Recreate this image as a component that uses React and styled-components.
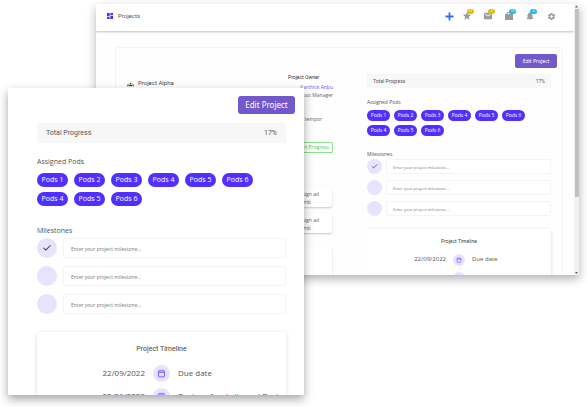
import React from "react";
import styled, { createGlobalStyle, ThemeProvider } from "styled-components";
import { Check } from "lucide-react";
import { MdDashboard, MdStar, MdEmail, MdNotifications, MdSettings, MdGroups } from "react-icons/md";

const Global = createGlobalStyle`
  *, *::before, *::after { box-sizing: border-box; }
  body {
    margin: 0;
    background: #fff;
    color: #555;
    font-family: "Open Sans", "Noto Sans", sans-serif;
    overflow: hidden;
  }
  button, input { font-family: inherit; }
  h1, h2, h3, p, ul, ol { margin: 0; padding: 0; font-weight: 400; list-style: none; }
`;

const large = {
  text: 7, date: 8, hint: 5,
  buttonText: 8, buttonW: 57, buttonH: 18, top: 8, right: 9, radius: 3,
  side: 29, endSide: 18, barTop: 9, barH: 20, barPad: 9,
  headTop: 14, headH: 10, podsTop: 6, podsEnd: 20, podW: 31, podH: 14, podGapX: 6, podGapY: 5,
  milesTop: 20, milesGap: 2, dot: 20, fieldH: 20, fieldGap: 6, rowGap: 8, inputPad: 7,
  cardTop: 18, cardPad: 11, titleH: 12, rowsTop: 10, node: 17, nodeGap: 8, icon: 9,
};

const small = {
  text: 5, date: 6, hint: 4,
  buttonText: 5, buttonW: 42, buttonH: 14, top: 6, right: 5, radius: 2,
  side: 0, endSide: 11, barTop: 6, barH: 14, barPad: 6,
  headTop: 11, headH: 6, podsTop: 5, podsEnd: 20, podW: 23, podH: 11, podGapX: 4, podGapY: 4,
  milesTop: 15, milesGap: 2, dot: 15, fieldH: 15, fieldGap: 4, rowGap: 6, inputPad: 6,
  cardTop: 13, cardPad: 8, titleH: 9, rowsTop: 8, node: 12, nodeGap: 7, icon: 6,
};

const Stage = styled.main`
  display: grid;
  grid-template-columns: 88fr 208fr 275fr;
  grid-template-rows: 84px 187px 120px;
  padding: 4px 8px 12px;
`;

const BackWindow = styled.section`
  grid-area: 1 / 2 / 3 / 4;
  display: flex;
  min-width: 0;
  min-height: 0;
  overflow: hidden;
  background: #fefefe;
  box-shadow: 0 4px 9px rgba(0, 0, 0, 0.3);
`;

const FrontWindow = styled.section`
  grid-area: 2 / 1 / 4 / 3;
  z-index: 1;
  min-width: 0;
  min-height: 0;
  overflow: hidden;
  background: #fff;
  box-shadow: 0 4px 9px rgba(0, 0, 0, 0.36);
`;

const Page = styled.div`
  flex: 1;
  min-width: 0;
  display: flex;
  flex-direction: column;
`;

const TopBar = styled.header`
  flex: none;
  display: flex;
  align-items: center;
  justify-content: space-between;
  height: 27px;
  padding: 0 18px 3px 10px;
  background: #fff;
  box-shadow: 0 1px 2px rgba(0, 0, 0, 0.25);
`;

const Brand = styled.h1`
  display: flex;
  align-items: center;
  gap: 4px;
  font: 400 6px/8px Roboto, sans-serif;
  color: #555;
  svg { color: #5130ff; }
`;

const Tools = styled.nav`
  display: flex;
  gap: 11px;
`;

const Tool = styled.button`
  position: relative;
  display: grid;
  place-items: center;
  width: ${(p) => (p.$primary ? 6 : 10)}px;
  height: 10px;
  padding: 0;
  border: 0;
  background: none;
  color: #9b9b9b;
`;

const Badge = styled.span`
  position: absolute;
  top: -2px;
  right: -2px;
  width: 7px;
  height: 5px;
  border-radius: 3px;
  background: ${(p) => p.$color};
  color: #fff;
  font-size: 3px;
  line-height: 5px;
  text-align: center;
`;

const Sheet = styled.div`
  flex: 1;
  display: grid;
  grid-template-columns: 110fr 141fr 195fr;
  margin: 16px 11px 0 19px;
  border: 1px solid #f4f4f4;
  border-bottom: 0;
  border-radius: 3px 3px 0 0;
  min-height: 0;
`;

const ProjectName = styled.div`
  display: flex;
  align-items: center;
  align-self: start;
  gap: 4px;
  margin-top: 30px;
  padding-left: 11px;
  color: #444;
  font: 400 6px/8px Roboto, sans-serif;
  svg { margin-top: 3px; }
`;

const OwnerColumn = styled.div`
  display: flex;
  flex-direction: column;
  min-width: 0;
  min-height: 0;
  overflow: hidden;
  padding: 25px 34px 0 62px;
  font-size: 5px;
  line-height: 8px;
  color: #666;
`;

const OwnerTitle = styled.h2`
  font: 400 5px/8px Roboto, sans-serif;
  white-space: nowrap;
  color: #333;
`;

const Person = styled.div`
  display: flex;
  flex-direction: column;
  align-items: flex-end;
  margin-top: 2px;
  white-space: nowrap;
  a { color: #6a50ff; text-decoration: none; }
`;

const Note = styled.p`
  margin-top: 16px;
  padding-right: 11px;
  text-align: right;
  white-space: nowrap;
`;

const Status = styled.span`
  align-self: flex-end;
  margin-top: 19px;
  padding: 0 3px;
  border: 1px solid #8be28d;
  border-radius: 1px;
  color: #4ecb53;
  line-height: 9px;
  white-space: nowrap;
`;

const NoteCards = styled.div`
  display: flex;
  flex-direction: column;
  gap: 7px;
  margin: 35px 0 0 -10px;
  padding: 0 1px 0 0;
`;

const NoteCard = styled.p`
  height: ${(p) => (p.$tall ? 40 : 19)}px;
  margin-top: ${(p) => (p.$tall ? 8 : 0)}px;
  padding: 2px 0 0 18px;
  border-radius: 2px;
  background: #fff;
  box-shadow: 0 1px 2px rgba(0, 0, 0, 0.22);
  white-space: nowrap;
`;

const Scrollbar = styled.div`
  flex: none;
  display: flex;
  flex-direction: column;
  align-items: center;
  justify-content: space-between;
  width: 5px;
  background: #f1f1f1;
  color: #666;
`;

const Thumb = styled.div`
  flex: 1;
  width: 4px;
  margin: 0 0 73px;
  background: #c1c1c1;
`;

const Panel = styled.div`
  display: flex;
  flex-direction: column;
  min-width: 0;
  min-height: 0;
  overflow: hidden;
  padding-top: ${(p) => p.theme.top}px;
`;

const EditButton = styled.button`
  flex: none;
  align-self: flex-end;
  width: ${(p) => p.theme.buttonW}px;
  height: ${(p) => p.theme.buttonH}px;
  margin-right: ${(p) => p.theme.right}px;
  padding: 0;
  border: 0;
  border-radius: ${(p) => p.theme.radius}px;
  background: #7259c9;
  color: #fff;
  font-size: ${(p) => p.theme.buttonText}px;
  font-family: "Noto Sans", sans-serif;
  line-height: 1;
  white-space: nowrap;
`;

const PanelBody = styled.div`
  flex: none;
  display: flex;
  flex-direction: column;
  padding: ${(p) => p.theme.barTop}px ${(p) => p.theme.endSide}px 0 ${(p) => p.theme.side}px;
`;

const Progress = styled.div`
  display: flex;
  align-items: center;
  justify-content: space-between;
  height: ${(p) => p.theme.barH}px;
  padding: 0 ${(p) => p.theme.barPad}px;
  background: #f7f7f7;
  font: 400 ${(p) => p.theme.text}px Roboto, sans-serif;
`;

const Heading = styled.h2`
  margin-top: ${(p) => p.theme[p.$space]}px;
  font-size: ${(p) => p.theme.text}px;
  line-height: ${(p) => p.theme.headH}px;
`;

const Pods = styled.ul`
  display: flex;
  flex-wrap: wrap;
  gap: ${(p) => p.theme.podGapY}px ${(p) => p.theme.podGapX}px;
  margin-top: ${(p) => p.theme.podsTop}px;
  padding-right: ${(p) => p.theme.podsEnd}px;
`;

const Pod = styled.li`
  width: ${(p) => p.theme.podW}px;
  height: ${(p) => p.theme.podH}px;
  border-radius: 10px;
  background: #5130ff;
  color: #fff;
  font-size: ${(p) => p.theme.text}px;
  line-height: ${(p) => p.theme.podH}px;
  text-align: center;
`;

const Milestones = styled.ul`
  display: flex;
  flex-direction: column;
  gap: ${(p) => p.theme.rowGap}px;
  margin-top: ${(p) => p.theme.milesGap}px;
`;

const Milestone = styled.li`
  display: flex;
  align-items: center;
  gap: ${(p) => p.theme.fieldGap}px;
`;

const Tick = styled.label`
  flex: none;
  position: relative;
  display: grid;
  place-items: center;
  width: ${(p) => p.theme.dot}px;
  height: ${(p) => p.theme.dot}px;
  border-radius: 50%;
  background: #e7e2fd;
  color: #444;
  input { position: absolute; inset: 0; margin: 0; opacity: 0; }
`;

const Field = styled.input`
  flex: 1;
  min-width: 0;
  height: ${(p) => p.theme.fieldH}px;
  padding: 2px ${(p) => p.theme.inputPad}px 0;
  border: 1px solid #f4f4f4;
  border-radius: 2px;
  background: #fff;
  font-size: ${(p) => p.theme.hint}px;
  outline: 0;
  &::placeholder { color: #777; }
`;

const Timeline = styled.section`
  height: 90px;
  margin-top: ${(p) => p.theme.cardTop}px;
  padding-top: ${(p) => p.theme.cardPad}px;
  border-radius: 2px;
  background: #fff;
  box-shadow: 0 1px 4px rgba(0, 0, 0, 0.14);
`;

const TimelineTitle = styled.h3`
  font: 400 ${(p) => p.theme.text}px/${(p) => p.theme.titleH}px Roboto, sans-serif;
  color: #444;
  text-align: center;
`;

const Events = styled.ol`
  display: flex;
  flex-direction: column;
  margin-top: ${(p) => p.theme.rowsTop}px;
`;

const Event = styled.li`
  display: grid;
  grid-template-columns: minmax(0, 1fr) auto minmax(0, 1fr);
  column-gap: ${(p) => p.theme.nodeGap}px;
  font-size: ${(p) => p.theme.date}px;
  line-height: ${(p) => p.theme.node - 2}px;
  white-space: nowrap;
  time { text-align: right; }
`;

const Marker = styled.span`
  display: flex;
  flex-direction: column;
  align-items: center;
  &::after {
    content: "";
    width: 1px;
    height: 3px;
    margin: 2px 0 1px;
    background: #eee;
  }
`;

const Node = styled.span`
  display: grid;
  place-items: center;
  width: ${(p) => p.theme.node}px;
  height: ${(p) => p.theme.node}px;
  border-radius: 50%;
  background: #e7e2fd;
  color: #7158ff;
`;

function CalendarIcon({ size }) {
  return (
    <svg width={size} height={size} viewBox="0 0 12 12" fill="none" stroke="currentColor" strokeWidth="1.2" aria-hidden="true">
      <rect x="2" y="2.5" width="8" height="8" rx="0.6" />
      <path d="M2 4.5h8M4 1v2M8 1v2" />
    </svg>
  );
}

function PlusIcon() {
  return (
    <svg width="9" height="9" viewBox="0 0 9 9" stroke="#356dff" strokeWidth="1.8" aria-hidden="true">
      <path d="M4.5 0.5v8M0.5 4.5h8" />
    </svg>
  );
}

function BagIcon() {
  return (
    <svg width="10" height="10" viewBox="0 0 10 10" fill="currentColor" aria-hidden="true">
      <path d="M1 3h8v5.4a.6.6 0 0 1-.6.6H1.600a.6.6 0 0 1-.6-.6z" />
      <path d="M3 3V1.500h4V3" fill="none" stroke="currentColor" strokeWidth="1" />
    </svg>
  );
}

const Arrow = ({ down }) => (
  <svg width="5" height="5" viewBox="0 0 5 5" fill="currentColor" aria-hidden="true">
    <path d={down ? "M1 2h3L2.5 4z" : "M1 3.5h3L2.5 1.5z"} />
  </svg>
);

const pods = ["Pods 1", "Pods 2", "Pods 3", "Pods 4", "Pods 5", "Pods 6", "Pods 4", "Pods 5", "Pods 6"];
const events = ["Due date", "Design of website and Deck"];

function ProjectPanel({ sizes }) {
  return (
    <ThemeProvider theme={sizes}>
      <Panel>
        <EditButton type="button">Edit Project</EditButton>
        <PanelBody>
          <Progress><span>Total Progress</span><span>17%</span></Progress>
          <Heading $space="headTop">Assigned Pods</Heading>
          <Pods>{pods.map((pod, i) => <Pod key={i}>{pod}</Pod>)}</Pods>
          <Heading $space="milesTop">Milestones</Heading>
          <Milestones>
            {[true, false, false].map((done, i) => (
              <Milestone key={i}>
                <Tick>
                  <input type="checkbox" defaultChecked={done} aria-label={`Milestone ${i + 1} done`} />
                  {done && <Check size={sizes.icon + 1} strokeWidth={2.5} />}
                </Tick>
                <Field placeholder="Enter your project milestone..." aria-label={`Milestone ${i + 1}`} />
              </Milestone>
            ))}
          </Milestones>
          <Timeline>
            <TimelineTitle>Project Timeline</TimelineTitle>
            <Events>
              {events.map((name) => (
                <Event key={name}>
                  <time dateTime="2022-09-22">22/09/2022</time>
                  <Marker><Node><CalendarIcon size={sizes.icon} /></Node></Marker>
                  <span>{name}</span>
                </Event>
              ))}
            </Events>
          </Timeline>
        </PanelBody>
      </Panel>
    </ThemeProvider>
  );
}

export default function App() {
  return (
    <>
      <Global />
      <Stage>
        <BackWindow>
          <Page>
            <TopBar>
              <Brand><MdDashboard size={8} />Projects</Brand>
              <Tools aria-label="Shortcuts">
                <Tool $primary aria-label="Add"><PlusIcon /></Tool>
                <Tool aria-label="Favourites"><MdStar size={10} /><Badge $color="#e5b90f">12</Badge></Tool>
                <Tool aria-label="Mail"><MdEmail size={10} /><Badge $color="#e5b90f">3</Badge></Tool>
                <Tool aria-label="Orders"><BagIcon /><Badge $color="#20b8f5">10</Badge></Tool>
                <Tool aria-label="Alerts"><MdNotifications size={10} /><Badge $color="#20b8f5">4</Badge></Tool>
                <Tool aria-label="Settings"><MdSettings size={9} /></Tool>
              </Tools>
            </TopBar>
            <Sheet>
              <ProjectName><MdGroups size={7} />Project Alpha</ProjectName>
              <OwnerColumn>
                <OwnerTitle>Project Owner</OwnerTitle>
                <Person><a href="#owner">Karthick Anbu</a><span>Asst Manager</span></Person>
                <Note>sed tempor</Note>
                <Status>In Progress</Status>
                <NoteCards>
                  <NoteCard>Design ad<br />enimb</NoteCard>
                  <NoteCard>Design ad<br />enimb</NoteCard>
                  <NoteCard $tall />
                </NoteCards>
              </OwnerColumn>
              <ProjectPanel sizes={small} />
            </Sheet>
          </Page>
          <Scrollbar><Arrow /><Thumb /><Arrow down /></Scrollbar>
        </BackWindow>
        <FrontWindow><ProjectPanel sizes={large} /></FrontWindow>
      </Stage>
    </>
  );
}
